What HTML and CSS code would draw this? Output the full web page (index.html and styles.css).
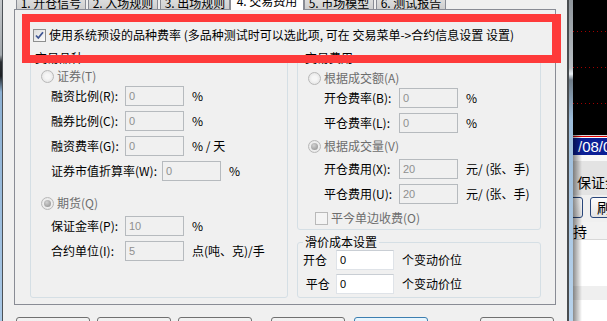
FILE: index.html
```html
<!DOCTYPE html>
<html>
<head>
  <title>交易费用</title>
  <link rel="stylesheet" href="styles.css">
</head>
<body>
  <div class="screen">
    <div class="frame-left"></div>

    <div class="dialog">
      <div class="tabs">
        <div class="tab">1. 开仓信号</div>
        <div class="tab">2. 入场规则</div>
        <div class="tab">3. 出场规则</div>
        <div class="tab active">4. 交易费用</div>
        <div class="tab">5. 市场模型</div>
        <div class="tab">6. 测试报告</div>
      </div>

      <div class="panel">
        <div class="check-row">
          <span class="box">
            <svg width="11" height="11" viewBox="0 0 11 11"><path d="M2 5.5 L4.3 8 L9 2.3" fill="none" stroke="#3f5593" stroke-width="1.8"/></svg>
          </span>
          <span>使用系统预设的品种费率 (多品种测试时可以选此项, 可在 交易菜单-&gt;合约信息设置 设置)</span>
        </div>

        <div class="groups">
          <div class="group group-kind">
            <div class="group-title">交易品种</div>
            <div class="opt first"><span class="radio"></span>证券(T)</div>
            <div class="field"><span class="field-label">融资比例(R):</span><span class="input">0</span><span class="unit">%</span></div>
            <div class="field"><span class="field-label">融券比例(C):</span><span class="input">0</span><span class="unit">%</span></div>
            <div class="field"><span class="field-label">融资费率(G):</span><span class="input">0</span><span class="unit">% / 天</span></div>
            <div class="field"><span class="field-label wide">证券市值折算率(W):</span><span class="input">0</span><span class="unit">%</span></div>
            <div class="opt second"><span class="radio on"></span>期货(Q)</div>
            <div class="field"><span class="field-label">保证金率(P):</span><span class="input">10</span><span class="unit">%</span></div>
            <div class="field"><span class="field-label">合约单位(I):</span><span class="input">5</span><span class="unit">点(吨、克)/手</span></div>
          </div>

          <div class="col-right">
            <div class="group group-fee">
              <div class="group-title">交易费用</div>
              <div class="opt first"><span class="radio"></span>根据成交额(A)</div>
              <div class="field"><span class="field-label">开仓费率(B):</span><span class="input">0</span><span class="unit">%</span></div>
              <div class="field"><span class="field-label">平仓费率(L):</span><span class="input">0</span><span class="unit">%</span></div>
              <div class="opt"><span class="radio on"></span>根据成交量(V)</div>
              <div class="field"><span class="field-label">开仓费用(X):</span><span class="input">20</span><span class="unit">元/ (张、手)</span></div>
              <div class="field"><span class="field-label">平仓费用(U):</span><span class="input">20</span><span class="unit">元/ (张、手)</span></div>
              <div class="opt sub"><span class="box off"></span>平今单边收费(O)</div>
            </div>

            <div class="group group-slip">
              <div class="group-title">滑价成本设置</div>
              <div class="field"><span class="field-label">开仓</span><span class="input live">0</span><span class="unit">个变动价位</span></div>
              <div class="field"><span class="field-label">&nbsp;平仓</span><span class="input live">0</span><span class="unit">个变动价位</span></div>
            </div>
          </div>
        </div>
      </div>

      <div class="buttons">
        <button class="btn">确定</button>
        <button class="btn">取消</button>
        <button class="btn">应用</button>
        <button class="btn gap-md">上一步</button>
        <button class="btn default">下一步</button>
        <button class="btn gap-lg">帮助</button>
      </div>
    </div>

    <div class="frame-right"></div>

    <div class="backapp">
      <div class="chart">
        <div class="dots"></div>
        <div class="dots"></div>
        <div class="dots"></div>
      </div>
      <div class="date-bar">/08/0</div>
      <div class="info">保证金</div>
      <div class="tool-row">
        <span class="tool-btn"></span>
        <span class="tool-btn">刷新</span>
      </div>
      <div class="grid-head">持</div>
      <div class="grid-rows">
        <div class="grid-row"></div>
        <div class="grid-row"></div>
        <div class="grid-row stripe"></div>
        <div class="grid-row"></div>
        <div class="grid-row stripe"></div>
      </div>
    </div>

    <div class="mark"></div>
  </div>
</body>
</html>
```

FILE: styles.css
```css
body {
  margin: 0;
  padding: 0;
  background: #000;
  font-family: "Noto Sans CJK SC", sans-serif;
  font-size: 12px;
  line-height: 16px;
  color: #000;
}

.screen {
  position: relative;
  display: flex;
  width: 607px;
  height: 321px;
  overflow: hidden;
}

/* window frames */
.frame-left {
  flex: none;
  width: 2px;
  border-right: 1px solid #4d5257;
  background: linear-gradient(#c4c7ca 0, #a3a9ae 55px, #2a2e32 62px, #1d2023 76px, #8db1d4 92px, #a9c8e6 321px);
}

.frame-right {
  flex: none;
  width: 4px;
  border-left: 2px solid #4a4d50;
  background: linear-gradient(#8f969c 0, #b9bfc4 68px, #e8eef3 74px, #6f7c88 80px, #9dbddb 120px, #b8d3ec 321px);
}

.dialog {
  flex: none;
  width: 564px;
  background: #f0f0f0;
}

/* tabs */
.tabs {
  display: flex;
  align-items: flex-end;
  gap: 2px;
  height: 9px;
  padding-left: 13px;
}

.tab {
  box-sizing: border-box;
  width: 70px;
  height: 20px;
  padding-top: 6px;
  border: 1px solid #898c95;
  border-bottom: none;
  border-radius: 2px 2px 0 0;
  background: linear-gradient(#f2f2f2, #ebebeb 50%, #dddddd 50%, #cfcfcf);
  text-align: center;
  line-height: 14px;
  white-space: nowrap;
}

.tab.active {
  position: relative;
  z-index: 1;
  width: 74px;
  height: 22px;
  margin: 0 -2px -1px;
  padding-top: 5px;
  background: #fff;
}

.panel {
  box-sizing: border-box;
  width: 542px;
  height: 296px;
  margin-left: 11px;
  padding: 17px 14px 0 15px;
  border: 1px solid #898c95;
  background: #f0f0f0;
}

.check-row {
  display: flex;
  align-items: center;
  gap: 3px;
  height: 16px;
  margin-left: 3px;
  white-space: nowrap;
}

.box {
  flex: none;
  display: flex;
  align-items: center;
  justify-content: center;
  box-sizing: border-box;
  width: 13px;
  height: 13px;
  border: 1px solid #8e8f8f;
  background: linear-gradient(135deg, #dcdcdc, #fdfdfd);
}

.box.off {
  border-color: #b9b9b9;
  background: #f4f4f4;
}

/* group boxes */
.groups {
  display: flex;
  gap: 9px;
  margin-top: 15px;
}

.col-right {
  display: flex;
  flex-direction: column;
  gap: 12px;
  width: 244px;
}

.group {
  position: relative;
  box-sizing: border-box;
  display: flex;
  flex-direction: column;
  gap: 5px;
  padding: 9px 0 0 10px;
  border: 1px solid #d5dfe5;
  border-radius: 3px;
  white-space: nowrap;
}

.group-title {
  position: absolute;
  top: -9px;
  left: 5px;
  padding: 0 2px;
  background: #f0f0f0;
}

.group-kind {
  width: 258px;
  height: 240px;
}

.group-kind .group-title {
  left: 2px;
}

.group-fee {
  height: 172px;
  padding-top: 11px;
}

.group-slip {
  height: 56px;
  gap: 4px;
  padding: 7px 0 0 5px;
}

.opt {
  display: flex;
  align-items: center;
  gap: 3px;
  height: 16px;
  color: #6d6d6d;
}

.opt.first {
  margin-bottom: -3px;
}

.opt.second {
  margin-top: 9px;
}

.opt.sub {
  margin-top: 1px;
  padding-left: 7px;
}

.radio {
  flex: none;
  display: flex;
  align-items: center;
  justify-content: center;
  box-sizing: border-box;
  width: 13px;
  height: 13px;
  border: 1px solid #b8b8b8;
  border-radius: 50%;
  background: radial-gradient(circle, #f6f6f6 30%, #dedede);
}

.radio.on::after {
  content: "";
  width: 7px;
  height: 7px;
  border-radius: 50%;
  background: radial-gradient(circle at 40% 35%, #d2d2d2, #8a8a8a);
}

.field {
  display: flex;
  align-items: center;
  height: 20px;
  padding-left: 10px;
}

.group-fee .field {
  padding-left: 16px;
}

.group-slip .field {
  padding-left: 0;
}

.field-label {
  flex: none;
  width: 74px;
}

.field-label.wide {
  width: 111px;
}

.group-fee .field-label {
  width: 75px;
}

.group-slip .field-label {
  width: 33px;
}

.input {
  box-sizing: border-box;
  width: 59px;
  height: 20px;
  padding-left: 3px;
  border: 1px solid #b6babe;
  background: #f0f0f0;
  color: #8f8f8f;
  font-family: "Liberation Sans", sans-serif;
  font-size: 11px;
  line-height: 18px;
}

.input.live {
  width: 58px;
  border-color: #dfe3e8;
  border-top-color: #c9ced4;
  background: #fff;
  color: #000;
}

.unit {
  margin-left: 8px;
}

/* bottom buttons, mostly cut off */
.buttons {
  display: flex;
  margin-top: 12px;
  padding-left: 13px;
}

.btn {
  flex: none;
  width: 74px;
  height: 23px;
  margin-left: 7px;
  border: 1px solid #707070;
  border-radius: 3px;
  background: linear-gradient(#f2f2f2, #ebebeb 50%, #dddddd 50%, #cfcfcf);
  font-family: "Noto Sans CJK SC", sans-serif;
  font-size: 12px;
}

.btn:first-child {
  margin-left: 0;
}

.btn.gap-md {
  margin-left: 19px;
}

.btn.default {
  margin-left: 9px;
  border-color: #3c7fb1;
  background: linear-gradient(#eaf6fd, #d9f0fc 50%, #bee6fd 50%, #a7d9f5);
}

.btn.gap-lg {
  margin-left: 52px;
}

/* application behind the dialog */
.backapp {
  position: relative;
  flex: none;
  width: 34px;
  overflow: hidden;
  background: #fff;
}

.backapp::after {
  content: "";
  position: absolute;
  top: 135px;
  bottom: 0;
  left: 0;
  width: 9px;
  background: linear-gradient(to right, rgba(0, 0, 0, 0.45), rgba(0, 0, 0, 0));
}

.chart {
  box-sizing: border-box;
  display: flex;
  flex-direction: column;
  gap: 35px;
  height: 135px;
  padding-top: 31px;
  background: #000;
}

.dots {
  height: 1px;
  background: repeating-linear-gradient(to right, #a00000 0 1px, transparent 1px 4px);
}

.date-bar {
  box-sizing: border-box;
  height: 20px;
  padding: 3px 0 0 5px;
  background: linear-gradient(#d8d8d8 0 1px, #e00000 1px 2px, #fff 2px 3px, #0b1f95 3px);
  color: #fff;
  font-family: "Liberation Sans", sans-serif;
  font-size: 15px;
  line-height: 17px;
  white-space: nowrap;
}

.info {
  box-sizing: border-box;
  height: 40px;
  padding: 18px 0 0 4px;
  background: linear-gradient(#f8f8f8 0 6px, #e3e3e3 6px);
  font-size: 14px;
  line-height: 18px;
  white-space: nowrap;
}

.tool-row {
  display: flex;
  gap: 7px;
  height: 27px;
  padding-top: 2px;
  box-sizing: border-box;
  background: #f0f0f0;
}

.tool-btn {
  flex: none;
  box-sizing: border-box;
  width: 40px;
  height: 21px;
  padding-left: 6px;
  border: 1px solid #29467a;
  border-radius: 3px;
  background: linear-gradient(#fdfdfd, #e4e4e4);
  font-size: 14px;
  line-height: 18px;
  white-space: nowrap;
}

.tool-btn:first-child {
  width: 30px;
  margin-left: -20px;
}

.grid-head {
  box-sizing: border-box;
  height: 18px;
  padding-top: 1px;
  border-bottom: 1px solid #d8d8d8;
  background: #f2f2f2;
  font-size: 14px;
  line-height: 16px;
}

.grid-row {
  height: 14px;
  margin-bottom: 9px;
}

.grid-row.stripe {
  background: #efefef;
}

/* red highlight drawn over the screenshot */
.mark {
  position: absolute;
  top: 14px;
  left: 22px;
  box-sizing: border-box;
  width: 539px;
  height: 49px;
  border: 8px solid #fe3a3a;
  border-right-width: 9px;
  z-index: 5;
}
```
